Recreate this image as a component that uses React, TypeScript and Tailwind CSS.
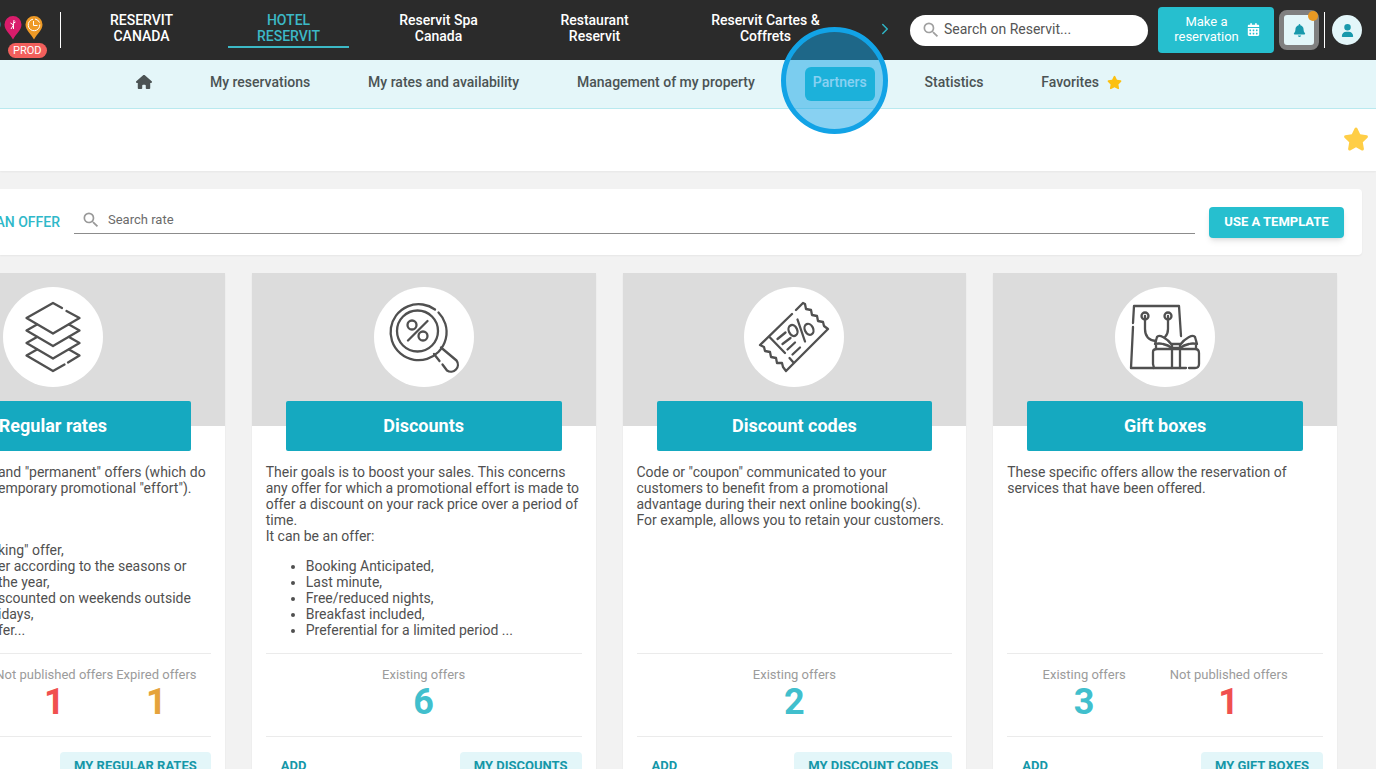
import type { ReactNode } from "react";
import { FaBell, FaCalendarDays, FaHouse, FaStar, FaUser } from "react-icons/fa6";
import { MdSearch } from "react-icons/md";
import { ChevronRight } from "lucide-react";

const stroke = {
  fill: "none",
  stroke: "#505050",
  strokeWidth: 2.3,
  strokeLinecap: "round" as const,
  strokeLinejoin: "round" as const,
};

function LayersIcon() {
  return (
    <svg viewBox="0 0 100 100" className="size-full" {...stroke}>
      <path d="M59 21 50 16 23.500 31 50 46.500 76.500 31 63.500 24" />
      <path d="M34 37.500 23.500 43.500 50 59 76.500 43.500 66 37.500" />
      <path d="M34 50 23.500 56 50 71.500 76.500 56 66 50" />
      <path d="M34 62.500 23.500 68.500 50 84 61.500 77.500M65 75.500 76.500 68.500 66 62.500" />
    </svg>
  );
}

function MagnifierIcon() {
  return (
    <svg viewBox="0 0 100 100" className="size-full" {...stroke}>
      <path d="M61 22.500A28 28 0 1 0 64.500 25.500" strokeDasharray="176" />
      <circle cx="43.500" cy="44" r="20.500" />
      <circle cx="38" cy="38" r="4.500" />
      <circle cx="49" cy="49" r="4.500" />
      <path d="M53.500 34 34 53.500" />
      <path d="M67 60.500 82.500 73.500A7 7 0 0 1 73 83.500L68.500 77.500M65.500 74 60 67" />
    </svg>
  );
}

function TicketIcon() {
  return (
    <svg viewBox="0 0 100 100" className="size-full" {...stroke}>
      <path d="M48 27 16 58 20 60 21 64 26 65 27 70 32 71 33 76 38 76 39 80 42 84 84 42 80 39 79 35 74 34 73 29 68 28 67 23 62 22 61 17 59 16 52 23" />
      <path d="M25.500 50 41 66M45.500 71 49 75" />
      <path d="M33.500 52 41.500 45.500M38.500 57 46.500 51M43.500 62.500 51 55.500M48.500 67.500 56 60.500M53.500 32.500 61 54.500" />
      <ellipse cx="49" cy="43.500" rx="4.200" ry="5.700" transform="rotate(-25 49 43.500)" />
      <ellipse cx="65" cy="42.300" rx="4.200" ry="5.700" transform="rotate(-25 65 42.300)" />
    </svg>
  );
}

function GiftIcon() {
  return (
    <svg viewBox="0 0 100 100" className="size-full" {...stroke}>
      <path d="M18 36 19 19H64L66 49M18 40 16 81H71" />
      <circle cx="30" cy="29" r="3.500" />
      <circle cx="53" cy="29" r="3.500" />
      <path d="M30 29V42Q30 53 41 54M53 29V42Q53 47 50 50" />
      <path d="M39 81Q39 81 38 77V65Q38 62 42 62H80Q84 62 84 66V77Q84 81 80 81H74M57 62V81M65 62V81" />
      <path d="M57 57H65V61H57ZM57 58C52 51 44 47 42 50L40 57Q44 56 48 57 53 58 57 61M65 58C70 51 78 47 80 50L82 57Q78 56 74 57 69 58 65 61M41 57V61M81 57V61" />
    </svg>
  );
}

function Pin({ color, children }: { color: string; children?: ReactNode }) {
  return (
    <svg viewBox="0 0 18 24" className="h-6 w-[18px] shrink-0" fill="none">
      <path d="M9 0A8.500 8.500 0 0 0 .5 8.500C.5 14 6 18 9 23.500 12 18 17.500 14 17.500 8.500A8.500 8.500 0 0 0 9 0Z" fill={color} />
      {children}
    </svg>
  );
}

type Stat = { label: string; value: number; tone: string };

type CardProps = {
  title: string;
  icon: ReactNode;
  children: ReactNode;
  stats: Stat[];
  tight?: boolean;
  link: string;
};

function OfferCard({ title, icon, children, stats, tight, link }: CardProps) {
  return (
    <article className="flex flex-col bg-white shadow-xs">
      <div className="h-[153px] bg-[#dcdcdc] pt-3.5">
        <div className="mx-auto size-[100px] rounded-full bg-white">{icon}</div>
        <h2 className="mx-[34px] mt-3.5 rounded-xs bg-[#15a9c0] py-[11px] text-center text-lg leading-7 font-bold text-white">
          {title}
        </h2>
      </div>
      <div className="mt-[38px] h-[189px] px-3.5 text-sm leading-4 text-[#505050]">{children}</div>
      <div className="mx-3.5 flex h-[84px] justify-center border-y border-[#ebebeb] pt-3">
        <dl className={`flex ${tight ? "gap-[3px]" : "gap-11"}`}>
          {stats.map((s) => (
            <div key={s.label} className="text-center whitespace-nowrap">
              <dt className="text-[13px] leading-[18px] text-[#9b9b9b]">{s.label}</dt>
              <dd className={`text-4xl leading-9 font-bold ${s.tone}`}>{s.value}</dd>
            </div>
          ))}
        </dl>
      </div>
      <div className="mx-3.5 mt-[15px] flex items-center justify-between pb-4 text-[13px] leading-4 font-bold text-[#1597a8]">
        <button type="button" className="px-[15px] py-1.5">ADD</button>
        <a href="#offers" className="rounded-sm bg-[#e3f6f9] px-3.5 py-1.5">{link}</a>
      </div>
    </article>
  );
}

const teal = "text-[#41bfcd]";
const red = "text-[#f0504f]";
const amber = "text-[#e5a33c]";

export default function App() {
  return (
    <div className="h-screen overflow-hidden bg-[#f2f2f2] font-[Roboto,sans-serif] text-[#4b4b4b]">
      <header className="flex h-[60px] items-center bg-[#2b2b2b] text-sm leading-4">
        <div className="relative flex h-full w-[61px] shrink-0 items-center">
          <div className="-ml-[17px] flex gap-[3px] pb-1">
            <Pin color="#25b4c5" />
            <Pin color="#d91c6b">
              <path d="m7 13 2.500-4 .5-5M9.500 9l-3-2M9.500 9v4M9.500 7l2-1" stroke="white" strokeWidth="1" />
            </Pin>
            <Pin color="#ee9a26">
              <path d="M8 3.200a5.800 5.800 0 1 0 6.800 5.300M10 3a5.800 5.800 0 0 1 4.500 3.500M8.500 5v4.500h4" stroke="white" strokeWidth="1" />
            </Pin>
          </div>
          <span className="absolute top-[43px] left-2 rounded-full bg-[#f25f5c] px-[5px] text-[11px] leading-[15px] text-white">PROD</span>
          <div className="ml-auto h-9 w-px bg-white" />
        </div>
        <nav aria-label="Properties" className="flex flex-1 items-center pb-1 text-center font-medium text-white">
          <a href="#canada" className="ml-5 w-[121px] shrink-0 px-5">RESERVIT CANADA</a>
          <a href="#hotel" aria-current="page" className="-mb-1 ml-[26px] w-[121px] shrink-0 border-b-2 border-[#3cb9c6] px-5 pb-0.5 text-[#3cb9c6]">HOTEL RESERVIT</a>
          <a href="#spa" className="ml-[29px] w-[121px] shrink-0 px-5">Reservit Spa Canada</a>
          <a href="#restaurant" className="ml-[35px] w-[121px] shrink-0 px-5">Restaurant Reservit</a>
          <a href="#cards" className="ml-[35px] w-[151px] shrink-0 px-5">Reservit Cartes &amp; Coffrets</a>
        </nav>
        <button type="button" aria-label="Next properties" className="mr-4 pb-0.5 text-[#2fb4c5]">
          <ChevronRight size={18} strokeWidth={2} />
        </button>
        <label className="flex h-[31px] w-[238px] shrink-0 items-center gap-[3px] rounded-full bg-white px-[11px]">
          <MdSearch size={20} className="shrink-0 text-[#a0a0a0]" />
          <input aria-label="Search" placeholder="Search on Reservit..." className="w-full min-w-0 pb-0.5 outline-none placeholder:text-[#555]" />
        </label>
        <button type="button" className="ml-2.5 flex h-[46px] w-[116px] shrink-0 items-center justify-center gap-2 rounded-sm bg-[#26bfcf] pb-0.5 pl-0.5 text-[13px] leading-[15px] text-white">
          <span>Make a<br />reservation</span>
          <FaCalendarDays size={13} />
        </button>
        <button type="button" aria-label="Notifications" className="relative ml-[5px] grid size-10 shrink-0 place-items-center rounded-lg border-5 border-[#808080] bg-[#e3f6f9] text-[#1899ac]">
          <FaBell size={13} />
          <span className="absolute -top-1 -right-1 size-2.5 rounded-full bg-[#e89923]" />
        </button>
        <div className="ml-[5px] h-9 w-px shrink-0 bg-white" />
        <button type="button" aria-label="Account" className="mr-3.5 ml-[7px] grid size-[30px] shrink-0 place-items-center rounded-full bg-[#e3f6f9] text-[#1899ac]">
          <FaUser size={13} />
        </button>
      </header>

      <nav aria-label="Main" className="flex h-[49px] items-center border-b border-[#b9e9ef] bg-[#e4f6f9] pr-[254px] pb-1 pl-[136px] text-sm leading-4 font-medium whitespace-nowrap text-[#4b5354]">
        <div className="flex flex-1 items-center justify-between">
          <a href="#home" aria-label="Home"><FaHouse size={16} /></a>
          <a href="#reservations">My reservations</a>
          <a href="#rates">My rates and availability</a>
          <a href="#property">Management of my property</a>
          <a href="#partners" className="relative -mx-2 -mb-1 rounded-md bg-[#26bfcf] px-2 pt-[7px] pb-[11px] text-white">
            Partners
            <span aria-hidden="true" className="pointer-events-none absolute -top-10 -left-6 size-[107px] rounded-full border-5 border-[#12a3e6] bg-[#12a3e6]/50" />
          </a>
          <a href="#statistics">Statistics</a>
          <a href="#favorites" className="flex items-center gap-2">Favorites <FaStar size={15} className="text-[#fcc011]" /></a>
        </div>
      </nav>

      <div className="flex h-[62px] items-center justify-end bg-white pr-[7px] pb-0.5 shadow-xs">
        <button type="button" aria-label="Add to favorites"><FaStar size={26} className="text-[#ffce46]" /></button>
      </div>

      <section className="mt-[18px] mr-3.5 flex h-[66px] items-center gap-3.5 rounded-r-sm bg-white pr-[18px] shadow-xs">
        <button type="button" className="w-[60px] shrink-0 text-sm font-medium whitespace-nowrap text-[#2fb8c9]">
          <span className="flex justify-end">AN OFFER</span>
        </button>
        <label className="mb-1 flex h-7 flex-1 items-center gap-[7px] border-b border-[#8c8c8c] px-[7px]">
          <MdSearch size={20} className="shrink-0 text-[#999]" />
          <input aria-label="Search rate" placeholder="Search rate" className="w-full text-[13px] outline-none placeholder:text-[#6b6b6b]" />
        </label>
        <button type="button" className="h-[31px] w-[135px] shrink-0 rounded-sm bg-[#26bfcf] text-[13px] font-bold text-white shadow-md">USE A TEMPLATE</button>
      </section>

      <main className="mt-[18px] mr-[39px] -ml-[119px] grid grid-cols-4 gap-[27px]">
        <OfferCard
          title="Regular rates"
          icon={<LayersIcon />}
          tight
          stats={[
            { label: "Existing offers", value: 4, tone: teal },
            { label: "Not published offers", value: 1, tone: red },
            { label: "Expired offers", value: 1, tone: amber },
          ]}
          link="MY REGULAR RATES"
        >
          <div className="pl-[103px] whitespace-nowrap">
            <p>and "permanent" offers (which do</p>
            <p>emporary promotional "effort").</p>
            <ul className="mt-[46px]">
              <li>king" offer,</li>
              <li>er according to the seasons or</li>
              <li>the year,</li>
              <li>scounted on weekends outside</li>
              <li>idays,</li>
              <li>fer...</li>
            </ul>
          </div>
        </OfferCard>
        <OfferCard
          title="Discounts"
          icon={<MagnifierIcon />}
          stats={[{ label: "Existing offers", value: 6, tone: teal }]}
          link="MY DISCOUNTS"
        >
          <p>Their goals is to boost your sales. This concerns any offer for which a promotional effort is made to offer a discount on your rack price over a period of time.</p>
          <p>It can be an offer:</p>
          <ul className="mt-3.5 list-disc pl-10">
            <li>Booking Anticipated,</li>
            <li>Last minute,</li>
            <li>Free/reduced nights,</li>
            <li>Breakfast included,</li>
            <li>Preferential for a limited period ...</li>
          </ul>
        </OfferCard>
        <OfferCard
          title="Discount codes"
          icon={<TicketIcon />}
          stats={[{ label: "Existing offers", value: 2, tone: teal }]}
          link="MY DISCOUNT CODES"
        >
          <p>Code or "coupon" communicated to your customers to benefit from a promotional advantage during their next online booking(s).</p>
          <p>For example, allows you to retain your customers.</p>
        </OfferCard>
        <OfferCard
          title="Gift boxes"
          icon={<GiftIcon />}
          stats={[
            { label: "Existing offers", value: 3, tone: teal },
            { label: "Not published offers", value: 1, tone: red },
          ]}
          link="MY GIFT BOXES"
        >
          <p>These specific offers allow the reservation of services that have been offered.</p>
        </OfferCard>
      </main>
    </div>
  );
}
